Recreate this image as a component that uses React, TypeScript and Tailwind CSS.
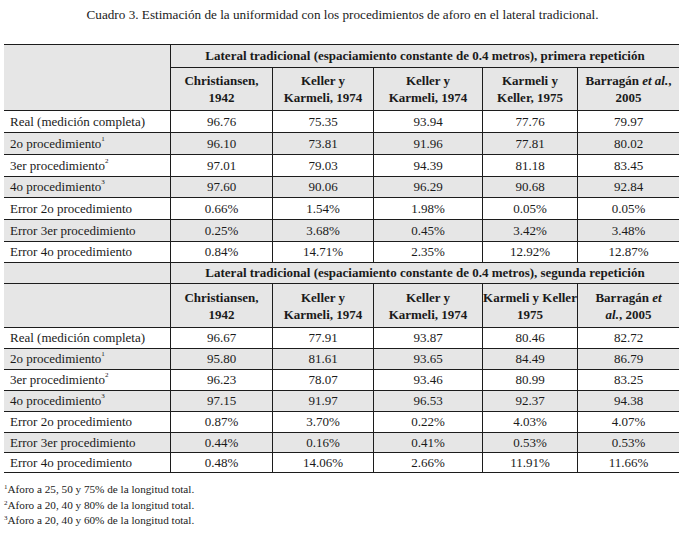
const W = ['w-[166px]', 'w-[102px]', 'w-[101px]', 'w-[109px]', 'w-[95px]', 'w-[102px]'];

type Row = { label: React.ReactNode; values: string[] };

const Sup = ({ n }: { n: string }) => <sup className="text-[7px] -top-[5px]">{n}</sup>;

const rows1: Row[] = [
  { label: 'Real (medición completa)', values: ['96.76', '75.35', '93.94', '77.76', '79.97'] },
  { label: <>2o procedimiento<Sup n="1" /></>, values: ['96.10', '73.81', '91.96', '77.81', '80.02'] },
  { label: <>3er procedimiento<Sup n="2" /></>, values: ['97.01', '79.03', '94.39', '81.18', '83.45'] },
  { label: <>4o procedimiento<Sup n="3" /></>, values: ['97.60', '90.06', '96.29', '90.68', '92.84'] },
  { label: 'Error 2o procedimiento', values: ['0.66%', '1.54%', '1.98%', '0.05%', '0.05%'] },
  { label: 'Error 3er procedimiento', values: ['0.25%', '3.68%', '0.45%', '3.42%', '3.48%'] },
  { label: 'Error 4o procedimiento', values: ['0.84%', '14.71%', '2.35%', '12.92%', '12.87%'] },
];

const rows2: Row[] = [
  { label: 'Real (medición completa)', values: ['96.67', '77.91', '93.87', '80.46', '82.72'] },
  { label: <>2o procedimiento<Sup n="1" /></>, values: ['95.80', '81.61', '93.65', '84.49', '86.79'] },
  { label: <>3er procedimiento<Sup n="2" /></>, values: ['96.23', '78.07', '93.46', '80.99', '83.25'] },
  { label: <>4o procedimiento<Sup n="3" /></>, values: ['97.15', '91.97', '96.53', '92.37', '94.38'] },
  { label: 'Error 2o procedimiento', values: ['0.87%', '3.70%', '0.22%', '4.03%', '4.07%'] },
  { label: 'Error 3er procedimiento', values: ['0.44%', '0.16%', '0.41%', '0.53%', '0.53%'] },
  { label: 'Error 4o procedimiento', values: ['0.48%', '14.06%', '2.66%', '11.91%', '11.66%'] },
];

const heads1: React.ReactNode[] = [
  <>Christiansen,<br />1942</>,
  <>Keller y<br />Karmeli, 1974</>,
  <>Keller y<br />Karmeli, 1974</>,
  <>Karmeli y<br />Keller, 1975</>,
  <>Barragán <i>et al.</i>,<br />2005</>,
];

const heads2: React.ReactNode[] = [
  <>Christiansen,<br />1942</>,
  <>Keller y<br />Karmeli, 1974</>,
  <>Keller y<br />Karmeli, 1974</>,
  <>Karmeli y Keller<br />1975</>,
  <>Barragán <i>et</i><br /><i>al.</i>, 2005</>,
];

function HeadCells({ heads }: { heads: React.ReactNode[] }) {
  return (
    <>
      {heads.map((h, i) => (
        <div
          key={i}
          className={`${W[i + 1]} border-l border-[#1c1c1c] flex items-center justify-center text-center font-bold leading-[17px]`}
        >
          <div>{h}</div>
        </div>
      ))}
    </>
  );
}

function DataRows({ rows, heights }: { rows: Row[]; heights: string[] }) {
  return (
    <>
      {rows.map((r, i) => (
        <div key={i} className={`flex border-b border-[#1c1c1c] ${heights[i]} ${i % 2 ? 'bg-[#e6e6e6]' : 'bg-white'}`}>
          <div className={`${W[0]} flex items-center pl-[6px]`}>{r.label}</div>
          {r.values.map((v, j) => (
            <div key={j} className={`${W[j + 1]} border-l border-[#1c1c1c] flex items-center justify-center`}>
              {v}
            </div>
          ))}
        </div>
      ))}
    </>
  );
}

export default function App() {
  return (
    <div className="w-[685px] h-[533px] bg-white text-[#1a1a1a] overflow-hidden" style={{ fontFamily: '"Liberation Serif", "DejaVu Serif", serif' }}>
      <div className="pt-[7px] text-center text-[13.2px] leading-[16px]">
        Cuadro 3. Estimación de la uniformidad con los procedimientos de aforo en el lateral tradicional.
      </div>

      <div className="mt-[21px] ml-[4px] w-[675px] border-t border-[#1c1c1c] text-[13px]">
        {/* primera repetición */}
        <div className="flex h-[66px] border-b border-[#1c1c1c] bg-[#e6e6e6]">
          <div className={W[0]} />
          <div className="flex-1 border-l border-[#1c1c1c] flex flex-col">
            <div className="h-[23px] border-b border-[#1c1c1c] flex items-center justify-center font-bold">
              Lateral tradicional (espaciamiento constante de 0.4 metros), primera repetición
            </div>
            <div className="flex flex-1 -ml-px">
              <HeadCells heads={heads1} />
            </div>
          </div>
        </div>
        <DataRows rows={rows1} heights={['h-[22px]', 'h-[22px]', 'h-[22px]', 'h-[21px]', 'h-[22px]', 'h-[22px]', 'h-[21px]']} />

        {/* segunda repetición */}
        <div className="flex h-[21px] border-b border-[#1c1c1c] bg-[#e6e6e6]">
          <div className={W[0]} />
          <div className="flex-1 border-l border-[#1c1c1c] flex items-center justify-center font-bold">
            Lateral tradicional (espaciamiento constante de 0.4 metros), segunda repetición
          </div>
        </div>
        <div className="flex h-[44px] border-b border-[#1c1c1c] bg-[#e6e6e6]">
          <div className={W[0]} />
          <HeadCells heads={heads2} />
        </div>
        <DataRows rows={rows2} heights={['h-[21px]', 'h-[21px]', 'h-[21px]', 'h-[21px]', 'h-[21px]', 'h-[20px]', 'h-[20px]']} />
      </div>

      <div className="mt-[9px] ml-[4px] text-[11.2px] leading-[15.5px]">
        <div><sup className="text-[7px] -top-[4px]">1</sup>Aforo a 25, 50 y 75% de la longitud total.</div>
        <div><sup className="text-[7px] -top-[4px]">2</sup>Aforo a 20, 40 y 80% de la longitud total.</div>
        <div><sup className="text-[7px] -top-[4px]">3</sup>Aforo a 20, 40 y 60% de la longitud total.</div>
      </div>
    </div>
  );
}
